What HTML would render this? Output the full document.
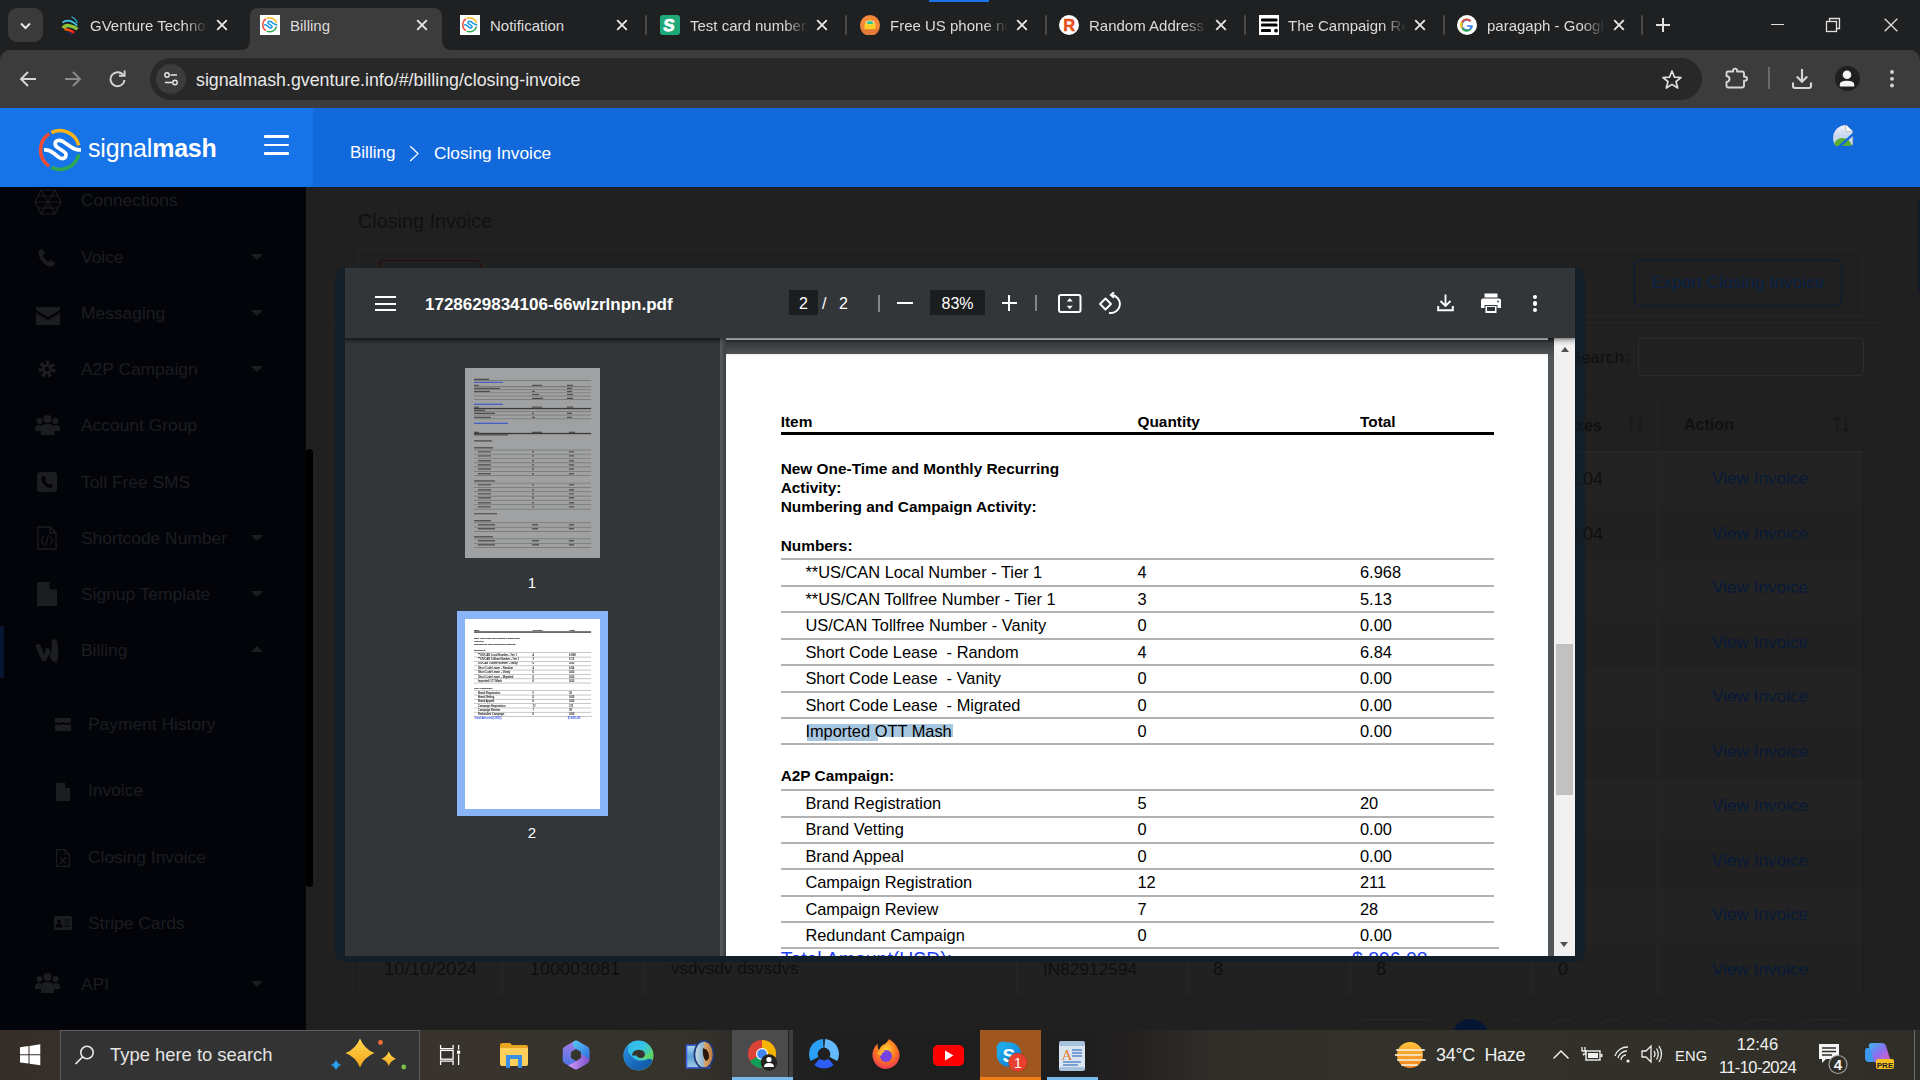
<!DOCTYPE html>
<html><head><meta charset="utf-8">
<style>
*{box-sizing:border-box;margin:0;padding:0}
html,body{width:1920px;height:1080px;overflow:hidden;background:#202124;font-family:"Liberation Sans",sans-serif}
.a{position:absolute}
#tabs{left:0;top:0;width:1920px;height:50px;background:#1f2021}
.tab{position:absolute;top:8px;height:42px;width:200px;color:#dcdcdc;font-size:15px}
.tab .fav{position:absolute;left:10px;top:7px;width:20px;height:20px}
.tab .tt{position:absolute;left:40px;top:8px;width:118px;white-space:nowrap;overflow:hidden;line-height:20px}
.tab .tt.fade{-webkit-mask-image:linear-gradient(90deg,#000 80%,transparent 100%)}
.tab .x{position:absolute;left:164px;top:9px;width:16px;height:16px}
.sep{position:absolute;top:15px;width:2px;height:20px;background:#4a4a4a;border-radius:1px}
#toolbar{left:0;top:50px;width:1920px;height:58px;background:#3c3c3c;border-radius:10px 10px 0 0}
#omni{left:150px;top:8px;width:1552px;height:42px;border-radius:21px;background:#282828}
#hdr{left:0;top:108px;width:1920px;height:79px;background:#1269dc}
#hdrL{left:0;top:0;width:313px;height:79px;background:#1673e8}
#sidebar{left:0;top:187px;width:306px;height:843px;background:#030409;overflow:hidden}
#main{left:306px;top:187px;width:1614px;height:843px;background:#202020;overflow:hidden}
#mframe{left:335px;top:268px;width:1250px;height:694px;background:#131f28;border-radius:0 0 9px 9px}
#modal{left:345px;top:268px;width:1230px;height:688px;background:#323639;overflow:hidden}
#taskbar{left:0;top:1030px;width:1920px;height:50px;background:#362e2b}
</style></head><body>
<div id="tabs" class="a">
  <div class="a" style="left:8px;top:8px;width:35px;height:34px;border-radius:9px;background:#3a3a3a"></div>
  <svg class="a" style="left:18px;top:18px" width="15" height="15" viewBox="0 0 15 15"><path d="M3 5.5 L7.5 10 L12 5.5" stroke="#e8e8e8" stroke-width="2" fill="none"/></svg>
  <div class="a" style="left:0;top:0;width:1px;height:1px"></div>
  <div class="a" style="left:929px;top:0;width:60px;height:2px;background:#1a73e8"></div>
  <!-- active tab shape -->
  <svg class="a" style="left:240px;top:7px" width="212" height="43" viewBox="0 0 212 43"><path d="M0 43 Q10 43 10 33 L10 10 Q10 1 19 1 L193 1 Q202 1 202 10 L202 33 Q202 43 212 43 Z" fill="#3c3c3c"/></svg>
  <div class="tab" style="left:50px"><svg class="fav" viewBox="0 0 20 20"><defs><linearGradient id="gvr" x1="0" y1="0" x2="1" y2="0"><stop offset="0" stop-color="#ff7a10"/><stop offset="1" stop-color="#ff1010"/></linearGradient></defs><path d="M11.5 1.8 Q15.5 3 17.3 8.2" stroke="#2aa8c8" stroke-width="1.3" fill="none"/><path d="M2.4 7.6 Q9 2.6 17.2 10.6" stroke="#40c8e8" stroke-width="1.7" fill="none"/><path d="M3 13.2 Q5 9.6 10 10.8 Q15 12 17.4 14.2" stroke="#8cc63f" stroke-width="3.4" fill="none"/><path d="M4.6 14 Q9 14.5 14.2 17.6" stroke="url(#gvr)" stroke-width="2.4" fill="none"/><path d="M6.8 17.2 Q9.5 18.6 12.2 19.1" stroke="#1c2a70" stroke-width="1.2" fill="none"/></svg><div class="tt fade">GVenture Technologies</div><svg class="x" viewBox="0 0 16 16"><path d="M3.2 3.2L12.8 12.8M12.8 3.2L3.2 12.8" stroke="#e6e6e6" stroke-width="1.9"/></svg></div>
  <div class="tab" style="left:250px"><svg class="fav" viewBox="0 0 20 20"><rect width="20" height="20" fill="#fff"/><g transform="translate(-0.3,0.4) scale(0.36)"><path d="M17.05 42.08 A19.4 19.4 0 0 1 17.33 9.73" stroke="#ef4b36" stroke-width="4" fill="none"/><path d="M19.40 8.56 A19.4 19.4 0 0 1 46.72 21.31" stroke="#fbb417" stroke-width="4" fill="none"/><path d="M46.80 30.36 A19.4 19.4 0 0 1 19.40 43.44" stroke="#2fa84f" stroke-width="4" fill="none"/><path d="M12 26 Q17 25.5 22 29.5 L27 33.5 Q31 36 33.5 33 Q35.5 29.5 31 27 L25.5 23.5 Q22 21 23.5 18 Q26 15 31 17.5 L39 23 Q43 26 49 26" stroke="#1e9be8" stroke-width="4.5" fill="none"/></g></svg><div class="tt">Billing</div><svg class="x" viewBox="0 0 16 16"><path d="M3.2 3.2L12.8 12.8M12.8 3.2L3.2 12.8" stroke="#e6e6e6" stroke-width="1.9"/></svg></div>
  <div class="tab" style="left:450px"><svg class="fav" viewBox="0 0 20 20"><rect width="20" height="20" fill="#fff"/><g transform="translate(-0.3,0.4) scale(0.36)"><path d="M17.05 42.08 A19.4 19.4 0 0 1 17.33 9.73" stroke="#ef4b36" stroke-width="4" fill="none"/><path d="M19.40 8.56 A19.4 19.4 0 0 1 46.72 21.31" stroke="#fbb417" stroke-width="4" fill="none"/><path d="M46.80 30.36 A19.4 19.4 0 0 1 19.40 43.44" stroke="#2fa84f" stroke-width="4" fill="none"/><path d="M12 26 Q17 25.5 22 29.5 L27 33.5 Q31 36 33.5 33 Q35.5 29.5 31 27 L25.5 23.5 Q22 21 23.5 18 Q26 15 31 17.5 L39 23 Q43 26 49 26" stroke="#1e9be8" stroke-width="4.5" fill="none"/></g></svg><div class="tt">Notification</div><svg class="x" viewBox="0 0 16 16"><path d="M3.2 3.2L12.8 12.8M12.8 3.2L3.2 12.8" stroke="#e6e6e6" stroke-width="1.9"/></svg></div>
  <div class="sep" style="left:645px"></div>
  <div class="tab" style="left:650px"><svg class="fav" viewBox="0 0 20 20"><rect width="20" height="20" rx="3" fill="#20a978"/><text x="10.2" y="16.2" font-size="17" font-weight="700" fill="#fff" stroke="#fff" stroke-width="0.7" text-anchor="middle" font-family="Liberation Sans" transform="skewX(-6)" style="font-weight:bold">S</text></svg><div class="tt fade">Test card numbers</div><svg class="x" viewBox="0 0 16 16"><path d="M3.2 3.2L12.8 12.8M12.8 3.2L3.2 12.8" stroke="#e6e6e6" stroke-width="1.9"/></svg></div>
  <div class="sep" style="left:845px"></div>
  <div class="tab" style="left:850px"><svg class="fav" viewBox="0 0 20 20"><circle cx="10" cy="10" r="10" fill="#f5883a"/><path d="M0.5 13.8 H19.5 A10 10 0 0 1 0.5 13.8Z" fill="#e47a38"/><path d="M4.5 8.8 L10 4.2 L15.5 8.8 V14.2 H4.5Z" fill="#fcd22a"/><path d="M5 6.8 Q10 5 15 6.8 L10 9.8Z" fill="#fff"/><ellipse cx="10" cy="7.6" rx="3.2" ry="1.6" fill="#2ac49a"/><path d="M4.5 14.2 L10 10.5 L15.5 14.2" stroke="#f0b818" stroke-width="0.6" fill="none"/></svg><div class="tt fade">Free US phone numbers</div><svg class="x" viewBox="0 0 16 16"><path d="M3.2 3.2L12.8 12.8M12.8 3.2L3.2 12.8" stroke="#e6e6e6" stroke-width="1.9"/></svg></div>
  <div class="sep" style="left:1045px"></div>
  <div class="tab" style="left:1049px"><svg class="fav" viewBox="0 0 20 20"><circle cx="10" cy="10" r="10" fill="#fff"/><text x="10.3" y="16.3" font-size="16.5" fill="#e9501c" stroke="#e9501c" stroke-width="0.5" text-anchor="middle" font-family="Liberation Sans" style="font-weight:bold">R</text></svg><div class="tt fade">Random Address Generator</div><svg class="x" viewBox="0 0 16 16"><path d="M3.2 3.2L12.8 12.8M12.8 3.2L3.2 12.8" stroke="#e6e6e6" stroke-width="1.9"/></svg></div>
  <div class="sep" style="left:1244px"></div>
  <div class="tab" style="left:1248px"><svg class="fav" viewBox="0 0 20 20" style="overflow:visible"><rect x="1" y="0" width="20" height="20" fill="#fff"/><rect x="3" y="3.4" width="16.5" height="3" rx="1.2" fill="#000"/><rect x="3" y="8.6" width="16.5" height="3" rx="1.2" fill="#000"/><rect x="3" y="14.1" width="10" height="3" rx="1.2" fill="#000"/><circle cx="18" cy="15.6" r="1.9" fill="#000"/></svg><div class="tt fade">The Campaign Registry</div><svg class="x" viewBox="0 0 16 16"><path d="M3.2 3.2L12.8 12.8M12.8 3.2L3.2 12.8" stroke="#e6e6e6" stroke-width="1.9"/></svg></div>
  <div class="sep" style="left:1443px"></div>
  <div class="tab" style="left:1447px"><svg class="fav" viewBox="0 0 20 20"><circle cx="10" cy="10" r="10" fill="#fff"/><path d="M15.6 10.2 L10.2 10.2 L10.2 12 L13.5 12 Q12.8 14.3 10.2 14.3 A4.3 4.3 0 1 1 13 6.8 L14.3 5.5 A6.2 6.2 0 1 0 16 11.4 Z" fill="#4285f4"/><path d="M5.8 7.7 L4.2 6.6 A6.2 6.2 0 0 1 14.3 5.5 L13 6.8 A4.3 4.3 0 0 0 5.8 7.7Z" fill="#ea4335"/><path d="M5.8 7.7 A4.3 4.3 0 0 0 5.9 12.4 L4.3 13.6 A6.2 6.2 0 0 1 4.2 6.6Z" fill="#fbbc05"/><path d="M5.9 12.4 A4.3 4.3 0 0 0 12.5 13.8 L14 15 A6.2 6.2 0 0 1 4.3 13.6Z" fill="#34a853"/></svg><div class="tt fade">paragaph - Google Search</div><svg class="x" viewBox="0 0 16 16"><path d="M3.2 3.2L12.8 12.8M12.8 3.2L3.2 12.8" stroke="#e6e6e6" stroke-width="1.9"/></svg></div>
  <div class="sep" style="left:1641px"></div>
  <svg class="a" style="left:1654px;top:16px" width="18" height="18" viewBox="0 0 18 18"><path d="M9 2V16M2 9H16" stroke="#e0e0e0" stroke-width="2"/></svg>
  <div class="a" style="left:1771px;top:24px;width:13px;height:1.3px;background:#e0e0e0"></div>
  <svg class="a" style="left:1825px;top:17px" width="16" height="16" viewBox="0 0 16 16"><rect x="1.5" y="4.5" width="10" height="10" stroke="#e0e0e0" stroke-width="1.3" fill="none"/><path d="M4.5 4.5V1.5H14.5V11.5H11.5" stroke="#e0e0e0" stroke-width="1.3" fill="none"/></svg>
  <svg class="a" style="left:1884px;top:18px" width="14" height="14" viewBox="0 0 14 14"><path d="M0.7 0.7L13.3 13.3M13.3 0.7L0.7 13.3" stroke="#e0e0e0" stroke-width="1.3"/></svg>
</div>
<div id="toolbar" class="a">
  <svg class="a" style="left:18px;top:20px" width="20" height="18" viewBox="0 0 20 18"><path d="M18 9H3M10 2L3 9L10 16" stroke="#d6d6d6" stroke-width="1.9" fill="none"/></svg>
  <svg class="a" style="left:63px;top:20px" width="20" height="18" viewBox="0 0 20 18"><path d="M2 9H17M10 2L17 9L10 16" stroke="#8a8a8a" stroke-width="1.9" fill="none"/></svg>
  <svg class="a" style="left:108px;top:20px" width="20" height="18" viewBox="0 0 20 18"><path d="M15.5 5.5 A7 7 0 1 0 16.5 10" stroke="#d6d6d6" stroke-width="1.9" fill="none"/><path d="M11 5.8H16.6V0.5" stroke="#d6d6d6" stroke-width="1.9" fill="none"/></svg>
  <div id="omni" class="a">
    <div class="a" style="left:6px;top:6px;width:30px;height:30px;border-radius:15px;background:#3c3c3c"></div>
    <svg class="a" style="left:13px;top:13px" width="16" height="16" viewBox="0 0 16 16"><circle cx="4" cy="4" r="2.2" stroke="#e8e8e8" stroke-width="1.4" fill="none"/><path d="M7.5 4H14M2 11.5H9" stroke="#e8e8e8" stroke-width="1.6"/><circle cx="12" cy="11.5" r="2.2" stroke="#e8e8e8" stroke-width="1.4" fill="none"/></svg>
    <div class="a" style="left:46px;top:11px;font-size:17.8px;color:#e8e8e8;white-space:nowrap;line-height:22px">signalmash.gventure.info/#/billing/closing-invoice</div>
    <svg class="a" style="left:1511px;top:11px" width="22" height="21" viewBox="0 0 22 21"><path d="M11 2L13.5 8.2L20 8.5L15 12.6L16.7 19L11 15.4L5.3 19L7 12.6L2 8.5L8.5 8.2Z" stroke="#e0e0e0" stroke-width="1.7" fill="none" stroke-linejoin="round"/></svg>
  </div>
  <svg class="a" style="left:1724px;top:16px" width="26" height="26" viewBox="0 0 26 26"><path d="M4 5.5 H9.2 V4.5 A1.9 1.9 0 0 1 13 4.5 V5.5 H18 Q20 5.5 20 7.5 V10.8 H21 A2 2 0 0 1 21 14.8 H20 V19.5 Q20 21.5 18 21.5 H4 Q2.5 21.5 2.5 20 V16 Q5.5 15.6 5.5 13 Q5.5 10.4 2.5 10 V7 Q2.5 5.5 4 5.5Z" stroke="#d6d6d6" stroke-width="1.9" fill="none" stroke-linejoin="round"/></svg>
  <div class="a" style="left:1768px;top:17px;width:1.5px;height:22px;background:#6a6a6a"></div>
  <svg class="a" style="left:1790px;top:17px" width="24" height="24" viewBox="0 0 24 24"><path d="M12 2V14.5M6.8 9.5L12 14.7L17.2 9.5" stroke="#d6d6d6" stroke-width="2.1" fill="none"/><path d="M3 15.5V19 Q3 21 5 21 H19 Q21 21 21 19 V15.5" stroke="#d6d6d6" stroke-width="2.1" fill="none"/></svg>
  <div class="a" style="left:1835px;top:16px;width:25px;height:25px;border-radius:13px;background:#1f1f1f"></div>
  <svg class="a" style="left:1835px;top:17px" width="24" height="24" viewBox="0 0 24 24"><circle cx="12" cy="7.8" r="4.3" fill="#f4f4f4"/><path d="M4.8 19.5 V17.5 Q4.8 13.8 12 13.8 Q19.2 13.8 19.2 17.5 V19.5 Z" fill="#f4f4f4"/></svg>
  <svg class="a" style="left:1886px;top:18px" width="12" height="22" viewBox="0 0 12 22"><circle cx="6" cy="4" r="1.9" fill="#d6d6d6"/><circle cx="6" cy="10.8" r="1.9" fill="#d6d6d6"/><circle cx="6" cy="17.5" r="1.9" fill="#d6d6d6"/></svg>
</div>
<div id="hdr" class="a"><div id="hdrL" class="a"></div>
  <svg class="a" style="left:32px;top:16px" width="56" height="52" viewBox="0 0 56 52">
    <path d="M17.05 42.08 A19.4 19.4 0 0 1 17.33 9.73" stroke="#ef4b36" stroke-width="3.5" fill="none"/>
    <path d="M19.40 8.56 A19.4 19.4 0 0 1 46.72 21.31" stroke="#fbb417" stroke-width="3.5" fill="none"/>
    <path d="M46.80 30.36 A19.4 19.4 0 0 1 19.40 43.44" stroke="#2fa84f" stroke-width="3.5" fill="none"/>
    <path d="M12 26 Q17 25.5 22 29.5 L27 33.5 Q31 36 33.5 33 Q35.5 29.5 31 27 L25.5 23.5 Q22 21 23.5 18 Q26 15 31 17.5 L39 23 Q43 26 49 26" stroke="#fff" stroke-width="3.7" fill="none"/>
  </svg>
  <div class="a" style="left:88px;top:24px;font-size:25px;color:#fff;line-height:32px;letter-spacing:-0.2px">signal<b>mash</b></div>
  <div class="a" style="left:264px;top:27px;width:25px;height:2.6px;background:#fff;border-radius:1px"></div>
  <div class="a" style="left:264px;top:35.5px;width:25px;height:2.6px;background:#fff;border-radius:1px"></div>
  <div class="a" style="left:264px;top:44px;width:25px;height:2.6px;background:#fff;border-radius:1px"></div>
  <div class="a" style="left:350px;top:34px;font-size:17px;color:#fff;line-height:22px">Billing</div>
  <svg class="a" style="left:408px;top:37px" width="12" height="18" viewBox="0 0 12 18"><path d="M2.2 1.2L10 8.6L2.2 16" stroke="#fff" stroke-width="1.3" fill="none"/></svg>
  <div class="a" style="left:434px;top:34px;font-size:17.3px;color:#fff;line-height:22px">Closing Invoice</div>
  <svg class="a" style="left:1833px;top:17px" width="21" height="21" viewBox="0 0 21 21">
    <defs><clipPath id="avc"><circle cx="13.2" cy="13.2" r="13.2"/></clipPath><linearGradient id="avg" x1="0" y1="0" x2="0" y2="1"><stop offset="0" stop-color="#f2f5fb"/><stop offset=".55" stop-color="#c9d6ef"/><stop offset="1" stop-color="#d5def2"/></linearGradient></defs>
    <g clip-path="url(#avc)">
      <path d="M0 0 H13 L19.7 6.5 V19.7 H0 Z" fill="url(#avg)" stroke="#b59f86" stroke-width="0.6"/>
      <ellipse cx="9.5" cy="20.5" rx="8.8" ry="7.5" fill="#5aac37"/>
      <path d="M13 0 V6.3 H19.7" fill="#f4f4f4" stroke="#9c9c9c" stroke-width="0.9"/>
      <path d="M13.2 0.3 L19.5 6.3 H13.2Z" fill="#f8f8f8"/>
      <path d="M21.5 8 L6.5 21.5" stroke="#1269dc" stroke-width="2.4"/>
    </g>
  </svg>
</div>
<div id="sidebar" class="a" style="color:#1c1d21;font-size:17.4px">
  <style>
  .si{position:absolute;left:81px;line-height:22px;white-space:nowrap}
  .ic{position:absolute}
  .car{position:absolute;left:251px;width:0;height:0;border-left:6px solid transparent;border-right:6px solid transparent;border-top:6px solid #1c1d21}
  .caru{position:absolute;left:251px;width:0;height:0;border-left:6px solid transparent;border-right:6px solid transparent;border-bottom:6px solid #1c1d21}
  </style>
  <svg class="ic" style="left:34px;top:2px" width="28" height="26" viewBox="0 0 28 26"><path d="M7 1H21L27 13L21 25H7L1 13Z M7 1L21 25 M21 1L7 25 M1 13H27 M4 7H24 M4 19H24" stroke="#1c1d21" stroke-width="1.2" fill="none"/></svg>
  <div class="si" style="top:2px">Connections</div>
  <svg class="ic" style="left:37px;top:61px" width="20" height="20" viewBox="0 0 20 20"><path d="M4 1 Q1 2 1.5 6 Q3 13 9 17 Q13 20 16 18 L18 15 L14 12 L11.5 14 Q7 11 6 7 L8 5 L5.5 1Z" fill="#1c1d21"/></svg>
  <div class="si" style="top:59px">Voice</div><div class="car" style="top:67px"></div>
  <svg class="ic" style="left:36px;top:120px" width="24" height="18" viewBox="0 0 24 18"><path d="M0 0H24V3L12 10L0 3Z M0 6L12 13L24 6V18H0Z" fill="#1c1d21"/></svg>
  <div class="si" style="top:115px">Messaging</div><div class="car" style="top:123px"></div>
  <svg class="ic" style="left:37px;top:172px" width="20" height="20" viewBox="0 0 20 20"><circle cx="10" cy="10" r="6" stroke="#1c1d21" stroke-width="5" fill="none" stroke-dasharray="3 2.3"/><circle cx="10" cy="10" r="5" fill="#1c1d21"/><circle cx="10" cy="10" r="2.2" fill="#03040a"/></svg>
  <div class="si" style="top:171px">A2P Campaign</div><div class="car" style="top:179px"></div>
  <svg class="ic" style="left:35px;top:227px" width="25" height="22" viewBox="0 0 25 22"><circle cx="12.5" cy="5" r="4" fill="#1c1d21"/><circle cx="4.5" cy="7" r="3" fill="#1c1d21"/><circle cx="20.5" cy="7" r="3" fill="#1c1d21"/><path d="M6 21V14Q6 10 12.5 10Q19 10 19 14V21Z M0 15Q0 11 4.5 11Q6 11 6 12V17H0Z M25 15Q25 11 20.5 11Q19 11 19 12V17H25Z" fill="#1c1d21"/></svg>
  <div class="si" style="top:227px">Account Group</div>
  <svg class="ic" style="left:37px;top:285px" width="20" height="20" viewBox="0 0 20 20"><rect width="20" height="20" rx="3" fill="#1c1d21"/><path d="M6 4 Q4 5 4.5 8 Q6 13 11 15.5 Q13.5 16.5 15 15 L16 13.5 L13.5 11.5 L12 12.8 Q9 11 8 8 L9.2 6.8 L7.5 4Z" fill="#03040a"/></svg>
  <div class="si" style="top:284px">Toll Free SMS</div>
  <svg class="ic" style="left:37px;top:527px" width="20" height="24" viewBox="0 0 20 24" style="display:none"></svg>
  <svg class="ic" style="left:37px;top:339px" width="20" height="24" viewBox="0 0 20 24"><path d="M1 1H13L19 7V23H1Z M13 1V7H19" stroke="#1c1d21" stroke-width="1.3" fill="none"/><path d="M7 10L4.5 14.5L7 19 M13 10L15.5 14.5L13 19 M11.5 9L8.5 20" stroke="#1c1d21" stroke-width="1.2" fill="none"/></svg>
  <div class="si" style="top:340px">Shortcode Number</div><div class="car" style="top:348px"></div>
  <svg class="ic" style="left:37px;top:395px" width="20" height="24" viewBox="0 0 20 24"><path d="M0 0H13L20 7V24H0Z" fill="#1c1d21"/><path d="M13 0V7H20" fill="#03040a" stroke="#03040a" stroke-width="0.8"/></svg>
  <div class="si" style="top:396px">Signup Template</div><div class="car" style="top:404px"></div>
  <div class="a" style="left:0;top:439px;width:4px;height:52px;background:#061633"></div>
  <svg class="ic" style="left:35px;top:452px" width="25" height="24" viewBox="0 0 25 24"><path d="M0 6 L5 5 L9 16 L11 9 L14 9 L16 16 L17 1 L21 0 Q25 8 22 24 L17 22 L14 15 L11 22 L7 22 Z" fill="#1c1d21"/></svg>
  <div class="si" style="top:452px">Billing</div><div class="caru" style="top:459px"></div>
  <svg class="ic" style="left:55px;top:531px" width="16" height="13" viewBox="0 0 16 13"><path d="M0 0H16V4Q12 6 8 4Q4 6 0 4Z M0 6Q4 8 8 6Q12 8 16 6V13H0Z" fill="#1c1d21"/></svg>
  <div class="si" style="left:88px;top:526px">Payment History</div>
  <svg class="ic" style="left:56px;top:596px" width="14" height="18" viewBox="0 0 14 18"><path d="M0 0H9L14 5V18H0Z" fill="#1c1d21"/><path d="M9 0V5H14" fill="#03040a"/></svg>
  <div class="si" style="left:88px;top:592px">Invoice</div>
  <svg class="ic" style="left:56px;top:662px" width="14" height="18" viewBox="0 0 14 18"><path d="M0.6 0.6H9L13.4 5V17.4H0.6Z M9 0.6V5H13.4" stroke="#1c1d21" stroke-width="1.1" fill="none"/><path d="M4 8L10 15M10 8L4 15" stroke="#1c1d21" stroke-width="1.2"/></svg>
  <div class="si" style="left:88px;top:659px">Closing Invoice</div>
  <svg class="ic" style="left:54px;top:729px" width="18" height="14" viewBox="0 0 18 14"><rect width="18" height="14" rx="1.5" fill="#1c1d21"/><circle cx="5" cy="5.5" r="2" fill="#03040a"/><path d="M2 11Q2 8 5 8Q8 8 8 11Z M10 4H16M10 7H16M10 10H16" stroke="#03040a" stroke-width="1.2" fill="#03040a"/></svg>
  <div class="si" style="left:88px;top:725px">Stripe Cards</div>
  <svg class="ic" style="left:35px;top:785px" width="25" height="22" viewBox="0 0 25 22"><circle cx="12.5" cy="5" r="4" fill="#1c1d21"/><circle cx="4.5" cy="7" r="3" fill="#1c1d21"/><circle cx="20.5" cy="7" r="3" fill="#1c1d21"/><path d="M6 21V14Q6 10 12.5 10Q19 10 19 14V21Z M0 15Q0 11 4.5 11Q6 11 6 12V17H0Z M25 15Q25 11 20.5 11Q19 11 19 12V17H25Z" fill="#1c1d21"/></svg>
  <div class="si" style="top:786px">API</div><div class="car" style="top:794px"></div>
</div>
<div class="a" style="left:306px;top:187px;width:9px;height:843px;background:#1e1e1e"></div>
<div class="a" style="left:307px;top:449px;width:7px;height:438px;background:#010101;border-radius:4px"></div>
<div id="main" class="a"></div>
<div class="a" style="left:306px;top:449px;width:7px;height:438px;background:#000;border-radius:4px"></div>
<div class="a" style="left:358px;top:208px;font-size:19.8px;color:#101010;line-height:26px">Closing Invoice</div>
<div class="a" style="left:322px;top:196px;width:1px;height:817px;background:#242424"></div>
<div class="a" style="left:358px;top:249px;width:1505px;height:68px;border:1px solid #262626"></div>
<div class="a" style="left:379px;top:260px;width:102px;height:46px;border:1.5px solid #2a0a0a;border-radius:4px"></div>
<div class="a" style="left:1634px;top:260px;width:208px;height:46px;border:1.5px solid #071c3b;border-radius:5px;color:#0a2246;font-size:17.4px;line-height:43px;text-align:center">Export Closing Invoice</div>
<div class="a" style="left:333px;top:322px;width:1550px;height:1px;background:#262626"></div>
<div class="a" style="left:1540px;top:345px;width:89px;font-size:17.4px;color:#0f0f0f;line-height:24px;text-align:right">Search:</div>
<div class="a" style="left:1638px;top:338px;width:226px;height:38px;border:1px solid #2b2b2b;border-radius:4px"></div>
<div class="a" style="left:356px;top:396px;width:1508px;height:601px;border:1px solid #1d1d1d"></div>
<div class="a" style="left:356px;top:451px;width:1508px;height:1px;background:#282828"></div>
<div class="a" style="left:357px;top:452.0px;width:1506px;height:53.5px;background:#232323;border-top:1px solid #242424"></div>
<div class="a" style="left:357px;top:506.6px;width:1506px;height:53.5px;background:#212121;border-top:1px solid #242424"></div>
<div class="a" style="left:357px;top:561.1px;width:1506px;height:53.5px;background:#232323;border-top:1px solid #242424"></div>
<div class="a" style="left:357px;top:615.6px;width:1506px;height:53.5px;background:#212121;border-top:1px solid #242424"></div>
<div class="a" style="left:357px;top:670.2px;width:1506px;height:53.5px;background:#232323;border-top:1px solid #242424"></div>
<div class="a" style="left:357px;top:724.8px;width:1506px;height:53.5px;background:#212121;border-top:1px solid #242424"></div>
<div class="a" style="left:357px;top:779.3px;width:1506px;height:53.5px;background:#232323;border-top:1px solid #242424"></div>
<div class="a" style="left:357px;top:833.8px;width:1506px;height:53.5px;background:#212121;border-top:1px solid #242424"></div>
<div class="a" style="left:357px;top:888.4px;width:1506px;height:53.5px;background:#232323;border-top:1px solid #242424"></div>
<div class="a" style="left:357px;top:943.0px;width:1506px;height:53.5px;background:#212121;border-top:1px solid #242424"></div>
<div class="a" style="left:501.5px;top:396px;width:1px;height:601px;background:#262626"></div>
<div class="a" style="left:644px;top:396px;width:1px;height:601px;background:#262626"></div>
<div class="a" style="left:1016px;top:396px;width:1px;height:601px;background:#262626"></div>
<div class="a" style="left:1187px;top:396px;width:1px;height:601px;background:#262626"></div>
<div class="a" style="left:1350px;top:396px;width:1px;height:601px;background:#262626"></div>
<div class="a" style="left:1531px;top:396px;width:1px;height:601px;background:#262626"></div>
<div class="a" style="left:1656.5px;top:396px;width:1px;height:601px;background:#262626"></div>
<div class="a" style="left:1575px;top:412px;font-size:16.2px;font-weight:bold;color:#101010;line-height:26px">xes</div>
<div class="a" style="left:1684px;top:412px;font-size:16px;font-weight:bold;color:#101010;line-height:26px">Action</div>
<svg class="a" style="left:1625px;top:414px" width="22" height="20" viewBox="0 0 22 20"><path d="M6 17V3M3 6L6 3L9 6 M15 3V17M12 14L15 17L18 14" stroke="#161616" stroke-width="1.1" fill="none"/></svg>
<svg class="a" style="left:1831px;top:414px" width="22" height="20" viewBox="0 0 22 20"><path d="M6 17V3M3 6L6 3L9 6 M15 3V17M12 14L15 17L18 14" stroke="#161616" stroke-width="1.1" fill="none"/></svg>
<div class="a" style="left:1712px;top:466.0px;font-size:17.2px;color:#071a38;line-height:24px">View Invoice</div>
<div class="a" style="left:1712px;top:520.5px;font-size:17.2px;color:#071a38;line-height:24px">View Invoice</div>
<div class="a" style="left:1712px;top:575.1px;font-size:17.2px;color:#071a38;line-height:24px">View Invoice</div>
<div class="a" style="left:1712px;top:629.6px;font-size:17.2px;color:#071a38;line-height:24px">View Invoice</div>
<div class="a" style="left:1712px;top:684.2px;font-size:17.2px;color:#071a38;line-height:24px">View Invoice</div>
<div class="a" style="left:1712px;top:738.8px;font-size:17.2px;color:#071a38;line-height:24px">View Invoice</div>
<div class="a" style="left:1712px;top:793.3px;font-size:17.2px;color:#071a38;line-height:24px">View Invoice</div>
<div class="a" style="left:1712px;top:847.8px;font-size:17.2px;color:#071a38;line-height:24px">View Invoice</div>
<div class="a" style="left:1712px;top:902.4px;font-size:17.2px;color:#071a38;line-height:24px">View Invoice</div>
<div class="a" style="left:1712px;top:957.0px;font-size:17.2px;color:#071a38;line-height:24px">View Invoice</div>
<div class="a" style="left:1568px;top:466.0px;font-size:18px;color:#0f0f0f;line-height:26px">2.04</div>
<div class="a" style="left:1568px;top:520.5px;font-size:18px;color:#0f0f0f;line-height:26px">2.04</div>
<div class="a" style="left:384px;top:956.0px;font-size:18.6px;color:#0f0f0f;line-height:26px">10/10/2024</div>
<div class="a" style="left:530px;top:956.0px;font-size:18px;color:#0f0f0f;line-height:26px">100003081</div>
<div class="a" style="left:671px;top:956.0px;font-size:17px;color:#0f0f0f;line-height:26px">vsdvsdv dsvsdvs</div>
<div class="a" style="left:1043px;top:956.0px;font-size:17.3px;color:#0f0f0f;line-height:26px">IN82912594</div>
<div class="a" style="left:1213px;top:956.0px;font-size:18px;color:#0f0f0f;line-height:26px">8</div>
<div class="a" style="left:1376px;top:956.0px;font-size:18px;color:#0f0f0f;line-height:26px">8</div>
<div class="a" style="left:1558px;top:956.0px;font-size:18px;color:#0f0f0f;line-height:26px">0</div>
<div class="a" style="left:1347px;top:1019px;width:95px;height:40px;border:1px solid #292929;border-radius:20px"></div>
<div class="a" style="left:1452px;top:1019px;width:37px;height:40px;background:#041633;border-radius:20px"></div>
<div class="a" style="left:1499px;top:1019px;width:37px;height:40px;border:1px solid #292929;border-radius:20px"></div>
<div class="a" style="left:1546px;top:1019px;width:37px;height:40px;border:1px solid #292929;border-radius:20px"></div>
<div class="a" style="left:1594px;top:1019px;width:37px;height:40px;border:1px solid #292929;border-radius:20px"></div>
<div class="a" style="left:1641px;top:1019px;width:37px;height:40px;border:1px solid #292929;border-radius:20px"></div>
<div class="a" style="left:1688px;top:1019px;width:39px;height:40px;border:1px solid #292929;border-radius:20px"></div>
<div class="a" style="left:1737px;top:1019px;width:49px;height:40px;border:1px solid #292929;border-radius:20px"></div>
<div class="a" style="left:1794px;top:1019px;width:66px;height:40px;border:1px solid #292929;border-radius:20px"></div>
<div class="a" style="left:356px;top:996px;width:1508px;height:1px;background:#1c1c1c"></div>
<div class="a" style="left:1918px;top:200px;width:2px;height:92px;background:#111b29"></div>
<style>
.pt{position:absolute;white-space:nowrap;line-height:20px}
.pl{position:absolute}
.pg{position:absolute;left:0;top:0;width:822px;height:1158px;background:#fff;overflow:hidden}
.thumbp .pt{-webkit-text-stroke:0.6px currentColor;opacity:.85}
.thumbp .pl{transform:scaleY(2.2)}
</style>
<div id="mframe" class="a" style="border-radius:9px;background:rgba(5,29,47,.5)"></div>
<div id="modal" class="a">
<div class="a" style="left:375px;top:70px;width:834px;height:618px;background:#525659;overflow:hidden">
 <div class="a" style="left:6px;top:-1px;width:822px;height:2px;background:#d8d8d8"></div>
 <div class="pg" style="left:6px;top:16px"><div class="pt" style="left:54.7px;top:57.56px;font-weight:bold;font-size:15.4px;color:#000">Item</div>
<div class="pt" style="left:411.5px;top:57.56px;font-weight:bold;font-size:15.4px;color:#000">Quantity</div>
<div class="pt" style="left:634.0px;top:57.56px;font-weight:bold;font-size:15.4px;color:#000">Total</div>
<div class="pl" style="left:54.5px;top:78.30px;width:713.0px;height:3.2px;background:#000"></div>
<div class="pt" style="left:54.7px;top:104.86px;font-weight:bold;font-size:15.4px;color:#000">New One-Time and Monthly Recurring</div>
<div class="pt" style="left:54.7px;top:124.06px;font-weight:bold;font-size:15.4px;color:#000">Activity:</div>
<div class="pt" style="left:54.7px;top:143.26px;font-weight:bold;font-size:15.4px;color:#000">Numbering and Campaign Activity:</div>
<div class="pt" style="left:54.7px;top:182.16px;font-weight:bold;font-size:15.4px;color:#000">Numbers:</div>
<div class="pl" style="left:81px;top:370.4px;width:71px;height:16.600000000000023px;background:#a7c6e0"></div>
<div class="pl" style="left:152px;top:370.4px;width:74.70000000000005px;height:12.600000000000023px;background:#a7c6e0"></div>
<div class="pl" style="left:54.5px;top:204.00px;width:713.0px;height:2px;background:#b2b2b2"></div>
<div class="pt" style="left:79.4px;top:208.32px;font-size:16.4px;color:#000">**US/CAN Local Number - Tier 1</div>
<div class="pt" style="left:411.5px;top:208.32px;font-size:16.4px;color:#000">4</div>
<div class="pt" style="left:634.0px;top:208.32px;font-size:16.4px;color:#000">6.968</div>
<div class="pl" style="left:54.5px;top:231.00px;width:713.0px;height:2px;background:#b2b2b2"></div>
<div class="pt" style="left:79.4px;top:234.76px;font-size:16.4px;color:#000">**US/CAN Tollfree Number - Tier 1</div>
<div class="pt" style="left:411.5px;top:234.76px;font-size:16.4px;color:#000">3</div>
<div class="pt" style="left:634.0px;top:234.76px;font-size:16.4px;color:#000">5.13</div>
<div class="pl" style="left:54.5px;top:257.00px;width:713.0px;height:2px;background:#b2b2b2"></div>
<div class="pt" style="left:79.4px;top:261.20px;font-size:16.4px;color:#000">US/CAN Tollfree Number - Vanity</div>
<div class="pt" style="left:411.5px;top:261.20px;font-size:16.4px;color:#000">0</div>
<div class="pt" style="left:634.0px;top:261.20px;font-size:16.4px;color:#000">0.00</div>
<div class="pl" style="left:54.5px;top:284.00px;width:713.0px;height:2px;background:#b2b2b2"></div>
<div class="pt" style="left:79.4px;top:287.64px;font-size:16.4px;color:#000">Short Code Lease &nbsp;- Random</div>
<div class="pt" style="left:411.5px;top:287.64px;font-size:16.4px;color:#000">4</div>
<div class="pt" style="left:634.0px;top:287.64px;font-size:16.4px;color:#000">6.84</div>
<div class="pl" style="left:54.5px;top:310.00px;width:713.0px;height:2px;background:#b2b2b2"></div>
<div class="pt" style="left:79.4px;top:314.08px;font-size:16.4px;color:#000">Short Code Lease &nbsp;- Vanity</div>
<div class="pt" style="left:411.5px;top:314.08px;font-size:16.4px;color:#000">0</div>
<div class="pt" style="left:634.0px;top:314.08px;font-size:16.4px;color:#000">0.00</div>
<div class="pl" style="left:54.5px;top:337.00px;width:713.0px;height:2px;background:#b2b2b2"></div>
<div class="pt" style="left:79.4px;top:340.52px;font-size:16.4px;color:#000">Short Code Lease &nbsp;- Migrated</div>
<div class="pt" style="left:411.5px;top:340.52px;font-size:16.4px;color:#000">0</div>
<div class="pt" style="left:634.0px;top:340.52px;font-size:16.4px;color:#000">0.00</div>
<div class="pl" style="left:54.5px;top:363.00px;width:713.0px;height:2px;background:#b2b2b2"></div>
<div class="pt" style="left:79.4px;top:366.96px;font-size:16.4px;color:#000">Imported OTT Mash</div>
<div class="pt" style="left:411.5px;top:366.96px;font-size:16.4px;color:#000">0</div>
<div class="pt" style="left:634.0px;top:366.96px;font-size:16.4px;color:#000">0.00</div>
<div class="pl" style="left:54.5px;top:389.00px;width:713.0px;height:2px;background:#b2b2b2"></div>
<div class="pt" style="left:54.7px;top:412.36px;font-weight:bold;font-size:15.4px;color:#000">A2P Campaign:</div>
<div class="pl" style="left:54.5px;top:435.00px;width:713.0px;height:2px;background:#b2b2b2"></div>
<div class="pt" style="left:79.4px;top:439.02px;font-size:16.4px;color:#000">Brand Registration</div>
<div class="pt" style="left:411.5px;top:439.02px;font-size:16.4px;color:#000">5</div>
<div class="pt" style="left:634.0px;top:439.02px;font-size:16.4px;color:#000">20</div>
<div class="pl" style="left:54.5px;top:462.00px;width:713.0px;height:2px;background:#b2b2b2"></div>
<div class="pt" style="left:79.4px;top:465.46px;font-size:16.4px;color:#000">Brand Vetting</div>
<div class="pt" style="left:411.5px;top:465.46px;font-size:16.4px;color:#000">0</div>
<div class="pt" style="left:634.0px;top:465.46px;font-size:16.4px;color:#000">0.00</div>
<div class="pl" style="left:54.5px;top:488.00px;width:713.0px;height:2px;background:#b2b2b2"></div>
<div class="pt" style="left:79.4px;top:491.90px;font-size:16.4px;color:#000">Brand Appeal</div>
<div class="pt" style="left:411.5px;top:491.90px;font-size:16.4px;color:#000">0</div>
<div class="pt" style="left:634.0px;top:491.90px;font-size:16.4px;color:#000">0.00</div>
<div class="pl" style="left:54.5px;top:514.00px;width:713.0px;height:2px;background:#b2b2b2"></div>
<div class="pt" style="left:79.4px;top:518.34px;font-size:16.4px;color:#000">Campaign Registration</div>
<div class="pt" style="left:411.5px;top:518.34px;font-size:16.4px;color:#000">12</div>
<div class="pt" style="left:634.0px;top:518.34px;font-size:16.4px;color:#000">211</div>
<div class="pl" style="left:54.5px;top:541.00px;width:713.0px;height:2px;background:#b2b2b2"></div>
<div class="pt" style="left:79.4px;top:544.78px;font-size:16.4px;color:#000">Campaign Review</div>
<div class="pt" style="left:411.5px;top:544.78px;font-size:16.4px;color:#000">7</div>
<div class="pt" style="left:634.0px;top:544.78px;font-size:16.4px;color:#000">28</div>
<div class="pl" style="left:54.5px;top:567.00px;width:713.0px;height:2px;background:#b2b2b2"></div>
<div class="pt" style="left:79.4px;top:571.22px;font-size:16.4px;color:#000">Redundant Campaign</div>
<div class="pt" style="left:411.5px;top:571.22px;font-size:16.4px;color:#000">0</div>
<div class="pt" style="left:634.0px;top:571.22px;font-size:16.4px;color:#000">0.00</div>
<div class="pl" style="left:54.5px;top:593.00px;width:718.5px;height:2px;background:#b2b2b2"></div>
<div class="pt" style="left:54.7px;top:595.08px;font-size:19.4px;color:#1f3ff2">Total Amount(USD):</div>
<div class="pt" style="left:626.0px;top:595.08px;font-size:19.4px;color:#1f3ff2">$ 896.08</div>
<div class="pt" style="left:54.7px;top:630.66px;font-weight:bold;font-size:15.4px;color:#000"></div></div>
 <div class="a" style="left:0;top:0;width:834px;height:18px;background:linear-gradient(#1e2022 0%,rgba(40,42,45,.6) 30%,rgba(82,86,89,0) 100%)"></div>
 <div class="a" style="left:6px;top:0;width:822px;height:1.6px;background:#c9c9c9"></div>
 <div class="a" style="left:0;top:0;width:6px;height:618px;background:linear-gradient(90deg,#575b5e,#3a3e41)"></div>
</div>
<div class="a" style="left:1209px;top:70px;width:21px;height:618px;background:#f1f1f1"></div>
<div class="a" style="left:1209px;top:70px;width:21px;height:8px;background:linear-gradient(#cfcfcf,#f1f1f1)"></div>
<div class="a" style="left:1215.5px;top:79px;width:0;height:0;border-left:4.5px solid transparent;border-right:4.5px solid transparent;border-bottom:5px solid #505050"></div>
<div class="a" style="left:1215px;top:674px;width:0;height:0;border-left:4.5px solid transparent;border-right:4.5px solid transparent;border-top:5px solid #505050"></div>
<div class="a" style="left:1211px;top:376px;width:17px;height:151px;background:#c1c1c1"></div>
<div class="a" style="left:0;top:70px;width:375px;height:618px;background:#323639;overflow:hidden">
 <div class="a" style="left:0;top:0;width:375px;height:6px;background:linear-gradient(#222426,rgba(50,54,57,0))"></div>
 <div class="a" style="left:120px;top:30px;width:135px;height:190px;overflow:hidden;background:#a0a1a2"><div class="pg" style="transform:scale(0.1642);transform-origin:0 0;background:transparent;opacity:.8"><div class="pl" style="left:54.81120584652862px;top:65.23020706455542px;width:91.35200974421437px;height:7.61266747868453px;background:#3a3a3a"></div>
<div class="pl" style="left:54.5px;top:73.08160779537135px;width:713.0px;height:4.8721071863581px;background:#6c6c6c"></div>
<div class="pl" style="left:54.81120584652862px;top:83.50060901339829px;width:176.6138855054811px;height:7.61266747868453px;background:#3048c0"></div>
<div class="pl" style="left:54.81120584652862px;top:101.77101096224116px;width:30.45066991473812px;height:7.61266747868453px;background:#3a3a3a"></div>
<div class="pl" style="left:408.0389768574908px;top:101.77101096224116px;width:60.90133982947624px;height:7.61266747868453px;background:#3a3a3a"></div>
<div class="pl" style="left:621.1936662606577px;top:101.77101096224116px;width:36.54080389768575px;height:7.61266747868453px;background:#3a3a3a"></div>
<div class="pl" style="left:54.5px;top:111.75395858708897px;width:713.0px;height:5.481120584652862px;background:#555"></div>
<div class="pl" style="left:54.81120584652862px;top:120.65042630937894px;width:158.34348355663823px;height:7.61266747868453px;background:#3a3a3a"></div>
<div class="pl" style="left:621.1936662606577px;top:120.65042630937894px;width:30.45066991473812px;height:7.61266747868453px;background:#3a3a3a"></div>
<div class="pl" style="left:54.5px;top:130.32886723507923px;width:713.0px;height:4.8721071863581px;background:#6c6c6c"></div>
<div class="pl" style="left:54.81120584652862px;top:138.9208282582218px;width:97.44214372716199px;height:7.61266747868453px;background:#3a3a3a"></div>
<div class="pl" style="left:408.0389768574908px;top:138.9208282582218px;width:18.270401948842874px;height:7.61266747868453px;background:#3a3a3a"></div>
<div class="pl" style="left:621.1936662606577px;top:138.9208282582218px;width:30.45066991473812px;height:7.61266747868453px;background:#3a3a3a"></div>
<div class="pl" style="left:54.5px;top:148.5992691839221px;width:713.0px;height:4.8721071863581px;background:#6c6c6c"></div>
<div class="pl" style="left:408.0389768574908px;top:157.8002436053592px;width:42.63093788063337px;height:7.61266747868453px;background:#3a3a3a"></div>
<div class="pl" style="left:621.1936662606577px;top:157.8002436053592px;width:36.54080389768575px;height:7.61266747868453px;background:#3a3a3a"></div>
<div class="pl" style="left:54.5px;top:168.08769792935442px;width:713.0px;height:4.8721071863581px;background:#6c6c6c"></div>
<div class="pl" style="left:408.0389768574908px;top:180.94275274056028px;width:66.99147381242386px;height:7.61266747868453px;background:#3a3a3a"></div>
<div class="pl" style="left:621.1936662606577px;top:180.94275274056028px;width:36.54080389768575px;height:7.61266747868453px;background:#3a3a3a"></div>
<div class="pl" style="left:54.5px;top:189.4031668696711px;width:713.0px;height:4.8721071863581px;background:#6c6c6c"></div>
<div class="pl" style="left:54.81120584652862px;top:217.483556638246px;width:176.6138855054811px;height:7.61266747868453px;background:#3050d0"></div>
<div class="pl" style="left:54.81120584652862px;top:234.53593179049943px;width:30.45066991473812px;height:7.61266747868453px;background:#3a3a3a"></div>
<div class="pl" style="left:408.0389768574908px;top:234.53593179049943px;width:60.90133982947624px;height:7.61266747868453px;background:#3a3a3a"></div>
<div class="pl" style="left:621.1936662606577px;top:234.53593179049943px;width:36.54080389768575px;height:7.61266747868453px;background:#3a3a3a"></div>
<div class="pl" style="left:54.5px;top:243.30085261875774px;width:713.0px;height:7.917174177831912px;background:#222"></div>
<div class="pl" style="left:54.81120584652862px;top:254.02436053593175px;width:66.99147381242386px;height:7.61266747868453px;background:#3a3a3a"></div>
<div class="pl" style="left:54.5px;top:262.4847746650426px;width:713.0px;height:4.8721071863581px;background:#6c6c6c"></div>
<div class="pl" style="left:54.81120584652862px;top:272.29476248477465px;width:127.89281364190012px;height:7.61266747868453px;background:#3a3a3a"></div>
<div class="pl" style="left:408.0389768574908px;top:272.29476248477465px;width:12.180267965895249px;height:7.61266747868453px;background:#3a3a3a"></div>
<div class="pl" style="left:621.1936662606577px;top:272.29476248477465px;width:30.45066991473812px;height:7.61266747868453px;background:#3a3a3a"></div>
<div class="pl" style="left:54.5px;top:283.8002436053593px;width:713.0px;height:4.8721071863581px;background:#6c6c6c"></div>
<div class="pl" style="left:54.81120584652862px;top:296.65529841656513px;width:103.53227771010961px;height:7.61266747868453px;background:#3a3a3a"></div>
<div class="pl" style="left:408.0389768574908px;top:296.65529841656513px;width:18.270401948842874px;height:7.61266747868453px;background:#3a3a3a"></div>
<div class="pl" style="left:621.1936662606577px;top:296.65529841656513px;width:30.45066991473812px;height:7.61266747868453px;background:#3a3a3a"></div>
<div class="pl" style="left:54.5px;top:306.9427527405603px;width:713.0px;height:4.8721071863581px;background:#6c6c6c"></div>
<div class="pl" style="left:54.81120584652862px;top:333.1961023142509px;width:207.06455542021922px;height:7.61266747868453px;background:#3050d0"></div>
<div class="pl" style="left:54.81120584652862px;top:388.0073081607795px;width:30.45066991473812px;height:7.61266747868453px;background:#3a3a3a"></div>
<div class="pl" style="left:408.0389768574908px;top:388.0073081607795px;width:60.90133982947624px;height:7.61266747868453px;background:#3a3a3a"></div>
<div class="pl" style="left:633.3739342265529px;top:388.0073081607795px;width:36.54080389768575px;height:7.61266747868453px;background:#3a3a3a"></div>
<div class="pl" style="left:54.5px;top:394.9451887941534px;width:713.0px;height:7.917174177831912px;background:#222"></div>
<div class="pl" style="left:54.81120584652862px;top:403.23264311814853px;width:207.06455542021922px;height:7.61266747868453px;background:#3a3a3a"></div>
<div class="pl" style="left:54.81120584652862px;top:440.3824604141292px;width:109.62241169305724px;height:7.61266747868453px;background:#3a3a3a"></div>
<div class="pl" style="left:54.81120584652862px;top:482.40438489646766px;width:115.71254567600486px;height:7.61266747868453px;background:#3a3a3a"></div>
<div class="pl" style="left:54.5px;top:496.95493300852615px;width:713.0px;height:4.8721071863581px;background:#6c6c6c"></div>
<div class="pl" style="left:79.17174177831912px;top:506.7649208282582px;width:79.17174177831912px;height:7.61266747868453px;background:#3a3a3a"></div>
<div class="pl" style="left:408.0389768574908px;top:506.7649208282582px;width:12.180267965895249px;height:7.61266747868453px;background:#3a3a3a"></div>
<div class="pl" style="left:633.3739342265529px;top:506.7649208282582px;width:30.45066991473812px;height:7.61266747868453px;background:#3a3a3a"></div>
<div class="pl" style="left:54.5px;top:522.533495736906px;width:713.0px;height:4.8721071863581px;background:#6c6c6c"></div>
<div class="pl" style="left:79.17174177831912px;top:531.7344701583436px;width:79.17174177831912px;height:7.61266747868453px;background:#3a3a3a"></div>
<div class="pl" style="left:408.0389768574908px;top:531.7344701583436px;width:12.180267965895249px;height:7.61266747868453px;background:#3a3a3a"></div>
<div class="pl" style="left:633.3739342265529px;top:531.7344701583436px;width:30.45066991473812px;height:7.61266747868453px;background:#3a3a3a"></div>
<div class="pl" style="left:54.5px;top:547.5030450669915px;width:713.0px;height:4.8721071863581px;background:#6c6c6c"></div>
<div class="pl" style="left:79.17174177831912px;top:560.967113276492px;width:79.17174177831912px;height:7.61266747868453px;background:#3a3a3a"></div>
<div class="pl" style="left:408.0389768574908px;top:560.967113276492px;width:12.180267965895249px;height:7.61266747868453px;background:#3a3a3a"></div>
<div class="pl" style="left:633.3739342265529px;top:560.967113276492px;width:30.45066991473812px;height:7.61266747868453px;background:#3a3a3a"></div>
<div class="pl" style="left:54.5px;top:574.9086479902558px;width:713.0px;height:4.8721071863581px;background:#6c6c6c"></div>
<div class="pl" style="left:79.17174177831912px;top:585.9366626065773px;width:79.17174177831912px;height:7.61266747868453px;background:#3a3a3a"></div>
<div class="pl" style="left:408.0389768574908px;top:585.9366626065773px;width:12.180267965895249px;height:7.61266747868453px;background:#3a3a3a"></div>
<div class="pl" style="left:633.3739342265529px;top:585.9366626065773px;width:30.45066991473812px;height:7.61266747868453px;background:#3a3a3a"></div>
<div class="pl" style="left:54.5px;top:600.4872107186358px;width:713.0px;height:4.8721071863581px;background:#6c6c6c"></div>
<div class="pl" style="left:79.17174177831912px;top:610.9062119366628px;width:79.17174177831912px;height:7.61266747868453px;background:#3a3a3a"></div>
<div class="pl" style="left:408.0389768574908px;top:610.9062119366628px;width:12.180267965895249px;height:7.61266747868453px;background:#3a3a3a"></div>
<div class="pl" style="left:633.3739342265529px;top:610.9062119366628px;width:30.45066991473812px;height:7.61266747868453px;background:#3a3a3a"></div>
<div class="pl" style="left:54.5px;top:627.2838002436051px;width:713.0px;height:4.8721071863581px;background:#6c6c6c"></div>
<div class="pl" style="left:79.17174177831912px;top:640.1388550548111px;width:79.17174177831912px;height:7.61266747868453px;background:#3a3a3a"></div>
<div class="pl" style="left:408.0389768574908px;top:640.1388550548111px;width:12.180267965895249px;height:7.61266747868453px;background:#3a3a3a"></div>
<div class="pl" style="left:633.3739342265529px;top:640.1388550548111px;width:30.45066991473812px;height:7.61266747868453px;background:#3a3a3a"></div>
<div class="pl" style="left:54.5px;top:652.8623629719855px;width:713.0px;height:4.8721071863581px;background:#6c6c6c"></div>
<div class="pl" style="left:54.81120584652862px;top:683.9878197320343px;width:127.89281364190012px;height:7.61266747868453px;background:#3a3a3a"></div>
<div class="pl" style="left:54.5px;top:698.5383678440927px;width:713.0px;height:4.8721071863581px;background:#6c6c6c"></div>
<div class="pl" style="left:79.17174177831912px;top:707.7393422655298px;width:79.17174177831912px;height:7.61266747868453px;background:#3a3a3a"></div>
<div class="pl" style="left:408.0389768574908px;top:707.7393422655298px;width:12.180267965895249px;height:7.61266747868453px;background:#3a3a3a"></div>
<div class="pl" style="left:633.3739342265529px;top:707.7393422655298px;width:30.45066991473812px;height:7.61266747868453px;background:#3a3a3a"></div>
<div class="pl" style="left:54.5px;top:724.7259439707672px;width:713.0px;height:4.8721071863581px;background:#6c6c6c"></div>
<div class="pl" style="left:79.17174177831912px;top:738.190012180268px;width:79.17174177831912px;height:7.61266747868453px;background:#3a3a3a"></div>
<div class="pl" style="left:408.0389768574908px;top:738.190012180268px;width:12.180267965895249px;height:7.61266747868453px;background:#3a3a3a"></div>
<div class="pl" style="left:633.3739342265529px;top:738.190012180268px;width:30.45066991473812px;height:7.61266747868453px;background:#3a3a3a"></div>
<div class="pl" style="left:54.5px;top:750.9135200974421px;width:713.0px;height:4.8721071863581px;background:#6c6c6c"></div>
<div class="pl" style="left:79.17174177831912px;top:762.5505481120584px;width:79.17174177831912px;height:7.61266747868453px;background:#3a3a3a"></div>
<div class="pl" style="left:408.0389768574908px;top:762.5505481120584px;width:12.180267965895249px;height:7.61266747868453px;background:#3a3a3a"></div>
<div class="pl" style="left:633.3739342265529px;top:762.5505481120584px;width:30.45066991473812px;height:7.61266747868453px;background:#3a3a3a"></div>
<div class="pl" style="left:54.5px;top:777.7101096224118px;width:713.0px;height:4.8721071863581px;background:#6c6c6c"></div>
<div class="pl" style="left:79.17174177831912px;top:786.911084043849px;width:79.17174177831912px;height:7.61266747868453px;background:#3a3a3a"></div>
<div class="pl" style="left:408.0389768574908px;top:786.911084043849px;width:12.180267965895249px;height:7.61266747868453px;background:#3a3a3a"></div>
<div class="pl" style="left:633.3739342265529px;top:786.911084043849px;width:30.45066991473812px;height:7.61266747868453px;background:#3a3a3a"></div>
<div class="pl" style="left:54.5px;top:803.2886723507917px;width:713.0px;height:4.8721071863581px;background:#6c6c6c"></div>
<div class="pl" style="left:79.17174177831912px;top:817.3617539585871px;width:79.17174177831912px;height:7.61266747868453px;background:#3a3a3a"></div>
<div class="pl" style="left:408.0389768574908px;top:817.3617539585871px;width:12.180267965895249px;height:7.61266747868453px;background:#3a3a3a"></div>
<div class="pl" style="left:633.3739342265529px;top:817.3617539585871px;width:30.45066991473812px;height:7.61266747868453px;background:#3a3a3a"></div>
<div class="pl" style="left:54.5px;top:830.0852618757611px;width:713.0px;height:4.8721071863581px;background:#6c6c6c"></div>
<div class="pl" style="left:79.17174177831912px;top:841.7222898903776px;width:79.17174177831912px;height:7.61266747868453px;background:#3a3a3a"></div>
<div class="pl" style="left:408.0389768574908px;top:841.7222898903776px;width:12.180267965895249px;height:7.61266747868453px;background:#3a3a3a"></div>
<div class="pl" style="left:633.3739342265529px;top:841.7222898903776px;width:30.45066991473812px;height:7.61266747868453px;background:#3a3a3a"></div>
<div class="pl" style="left:54.5px;top:856.8818514007309px;width:713.0px;height:4.8721071863581px;background:#6c6c6c"></div>
<div class="pl" style="left:54.81120584652862px;top:883.744214372716px;width:140.07308160779536px;height:7.61266747868453px;background:#3a3a3a"></div>
<div class="pl" style="left:54.81120584652862px;top:926.3751522533494px;width:103.53227771010961px;height:7.61266747868453px;background:#3a3a3a"></div>
<div class="pl" style="left:54.5px;top:940.3166869671129px;width:713.0px;height:4.8721071863581px;background:#6c6c6c"></div>
<div class="pl" style="left:79.17174177831912px;top:951.3447015834348px;width:103.53227771010961px;height:7.61266747868453px;background:#3a3a3a"></div>
<div class="pl" style="left:408.0389768574908px;top:951.3447015834348px;width:36.54080389768575px;height:7.61266747868453px;background:#3a3a3a"></div>
<div class="pl" style="left:633.3739342265529px;top:951.3447015834348px;width:30.45066991473812px;height:7.61266747868453px;background:#3a3a3a"></div>
<div class="pl" style="left:54.5px;top:967.1132764920831px;width:713.0px;height:4.8721071863581px;background:#6c6c6c"></div>
<div class="pl" style="left:79.17174177831912px;top:975.0962241169304px;width:103.53227771010961px;height:7.61266747868453px;background:#3a3a3a"></div>
<div class="pl" style="left:408.0389768574908px;top:975.0962241169304px;width:36.54080389768575px;height:7.61266747868453px;background:#3a3a3a"></div>
<div class="pl" style="left:633.3739342265529px;top:975.0962241169304px;width:30.45066991473812px;height:7.61266747868453px;background:#3a3a3a"></div>
<div class="pl" style="left:54.5px;top:992.6918392204626px;width:713.0px;height:4.8721071863581px;background:#6c6c6c"></div>
<div class="pl" style="left:54.81120584652862px;top:1024.426309378806px;width:115.71254567600486px;height:7.61266747868453px;background:#3a3a3a"></div>
<div class="pl" style="left:54.5px;top:1038.3678440925698px;width:713.0px;height:4.8721071863581px;background:#6c6c6c"></div>
<div class="pl" style="left:79.17174177831912px;top:1048.1778319123018px;width:103.53227771010961px;height:7.61266747868453px;background:#3a3a3a"></div>
<div class="pl" style="left:408.0389768574908px;top:1048.1778319123018px;width:42.63093788063337px;height:7.61266747868453px;background:#3a3a3a"></div>
<div class="pl" style="left:633.3739342265529px;top:1048.1778319123018px;width:30.45066991473812px;height:7.61266747868453px;background:#3a3a3a"></div>
<div class="pl" style="left:54.5px;top:1065.1644336175393px;width:713.0px;height:4.8721071863581px;background:#6c6c6c"></div>
<div class="pl" style="left:79.17174177831912px;top:1073.1473812423872px;width:103.53227771010961px;height:7.61266747868453px;background:#3a3a3a"></div>
<div class="pl" style="left:408.0389768574908px;top:1073.1473812423872px;width:42.63093788063337px;height:7.61266747868453px;background:#3a3a3a"></div>
<div class="pl" style="left:633.3739342265529px;top:1073.1473812423872px;width:30.45066991473812px;height:7.61266747868453px;background:#3a3a3a"></div>
<div class="pl" style="left:54.5px;top:1090.1339829476246px;width:713.0px;height:4.8721071863581px;background:#6c6c6c"></div></div></div>
 <div class="a" style="left:112px;top:235px;width:150px;height:20px;text-align:center;color:#fff;font-size:15px;line-height:20px">1</div>
 <div class="a" style="left:112px;top:273px;width:151px;height:205px;background:#8ab4f8"></div>
 <div class="a" style="left:120px;top:281px;width:135px;height:190px;overflow:hidden;background:#fff"><div class="pg thumbp" style="transform:scale(0.1642);transform-origin:0 0"><div class="pt" style="left:54.7px;top:57.56px;font-weight:bold;font-size:15.4px;color:#000">Item</div>
<div class="pt" style="left:411.5px;top:57.56px;font-weight:bold;font-size:15.4px;color:#000">Quantity</div>
<div class="pt" style="left:634.0px;top:57.56px;font-weight:bold;font-size:15.4px;color:#000">Total</div>
<div class="pl" style="left:54.5px;top:78.30px;width:713.0px;height:3.2px;background:#000"></div>
<div class="pt" style="left:54.7px;top:104.86px;font-weight:bold;font-size:15.4px;color:#000">New One-Time and Monthly Recurring</div>
<div class="pt" style="left:54.7px;top:124.06px;font-weight:bold;font-size:15.4px;color:#000">Activity:</div>
<div class="pt" style="left:54.7px;top:143.26px;font-weight:bold;font-size:15.4px;color:#000">Numbering and Campaign Activity:</div>
<div class="pt" style="left:54.7px;top:182.16px;font-weight:bold;font-size:15.4px;color:#000">Numbers:</div>
<div class="pl" style="left:54.5px;top:204.00px;width:713.0px;height:2px;background:#b2b2b2"></div>
<div class="pt" style="left:79.4px;top:208.32px;font-size:16.4px;color:#000">**US/CAN Local Number - Tier 1</div>
<div class="pt" style="left:411.5px;top:208.32px;font-size:16.4px;color:#000">4</div>
<div class="pt" style="left:634.0px;top:208.32px;font-size:16.4px;color:#000">6.968</div>
<div class="pl" style="left:54.5px;top:231.00px;width:713.0px;height:2px;background:#b2b2b2"></div>
<div class="pt" style="left:79.4px;top:234.76px;font-size:16.4px;color:#000">**US/CAN Tollfree Number - Tier 1</div>
<div class="pt" style="left:411.5px;top:234.76px;font-size:16.4px;color:#000">3</div>
<div class="pt" style="left:634.0px;top:234.76px;font-size:16.4px;color:#000">5.13</div>
<div class="pl" style="left:54.5px;top:257.00px;width:713.0px;height:2px;background:#b2b2b2"></div>
<div class="pt" style="left:79.4px;top:261.20px;font-size:16.4px;color:#000">US/CAN Tollfree Number - Vanity</div>
<div class="pt" style="left:411.5px;top:261.20px;font-size:16.4px;color:#000">0</div>
<div class="pt" style="left:634.0px;top:261.20px;font-size:16.4px;color:#000">0.00</div>
<div class="pl" style="left:54.5px;top:284.00px;width:713.0px;height:2px;background:#b2b2b2"></div>
<div class="pt" style="left:79.4px;top:287.64px;font-size:16.4px;color:#000">Short Code Lease &nbsp;- Random</div>
<div class="pt" style="left:411.5px;top:287.64px;font-size:16.4px;color:#000">4</div>
<div class="pt" style="left:634.0px;top:287.64px;font-size:16.4px;color:#000">6.84</div>
<div class="pl" style="left:54.5px;top:310.00px;width:713.0px;height:2px;background:#b2b2b2"></div>
<div class="pt" style="left:79.4px;top:314.08px;font-size:16.4px;color:#000">Short Code Lease &nbsp;- Vanity</div>
<div class="pt" style="left:411.5px;top:314.08px;font-size:16.4px;color:#000">0</div>
<div class="pt" style="left:634.0px;top:314.08px;font-size:16.4px;color:#000">0.00</div>
<div class="pl" style="left:54.5px;top:337.00px;width:713.0px;height:2px;background:#b2b2b2"></div>
<div class="pt" style="left:79.4px;top:340.52px;font-size:16.4px;color:#000">Short Code Lease &nbsp;- Migrated</div>
<div class="pt" style="left:411.5px;top:340.52px;font-size:16.4px;color:#000">0</div>
<div class="pt" style="left:634.0px;top:340.52px;font-size:16.4px;color:#000">0.00</div>
<div class="pl" style="left:54.5px;top:363.00px;width:713.0px;height:2px;background:#b2b2b2"></div>
<div class="pt" style="left:79.4px;top:366.96px;font-size:16.4px;color:#000">Imported OTT Mash</div>
<div class="pt" style="left:411.5px;top:366.96px;font-size:16.4px;color:#000">0</div>
<div class="pt" style="left:634.0px;top:366.96px;font-size:16.4px;color:#000">0.00</div>
<div class="pl" style="left:54.5px;top:389.00px;width:713.0px;height:2px;background:#b2b2b2"></div>
<div class="pt" style="left:54.7px;top:412.36px;font-weight:bold;font-size:15.4px;color:#000">A2P Campaign:</div>
<div class="pl" style="left:54.5px;top:435.00px;width:713.0px;height:2px;background:#b2b2b2"></div>
<div class="pt" style="left:79.4px;top:439.02px;font-size:16.4px;color:#000">Brand Registration</div>
<div class="pt" style="left:411.5px;top:439.02px;font-size:16.4px;color:#000">5</div>
<div class="pt" style="left:634.0px;top:439.02px;font-size:16.4px;color:#000">20</div>
<div class="pl" style="left:54.5px;top:462.00px;width:713.0px;height:2px;background:#b2b2b2"></div>
<div class="pt" style="left:79.4px;top:465.46px;font-size:16.4px;color:#000">Brand Vetting</div>
<div class="pt" style="left:411.5px;top:465.46px;font-size:16.4px;color:#000">0</div>
<div class="pt" style="left:634.0px;top:465.46px;font-size:16.4px;color:#000">0.00</div>
<div class="pl" style="left:54.5px;top:488.00px;width:713.0px;height:2px;background:#b2b2b2"></div>
<div class="pt" style="left:79.4px;top:491.90px;font-size:16.4px;color:#000">Brand Appeal</div>
<div class="pt" style="left:411.5px;top:491.90px;font-size:16.4px;color:#000">0</div>
<div class="pt" style="left:634.0px;top:491.90px;font-size:16.4px;color:#000">0.00</div>
<div class="pl" style="left:54.5px;top:514.00px;width:713.0px;height:2px;background:#b2b2b2"></div>
<div class="pt" style="left:79.4px;top:518.34px;font-size:16.4px;color:#000">Campaign Registration</div>
<div class="pt" style="left:411.5px;top:518.34px;font-size:16.4px;color:#000">12</div>
<div class="pt" style="left:634.0px;top:518.34px;font-size:16.4px;color:#000">211</div>
<div class="pl" style="left:54.5px;top:541.00px;width:713.0px;height:2px;background:#b2b2b2"></div>
<div class="pt" style="left:79.4px;top:544.78px;font-size:16.4px;color:#000">Campaign Review</div>
<div class="pt" style="left:411.5px;top:544.78px;font-size:16.4px;color:#000">7</div>
<div class="pt" style="left:634.0px;top:544.78px;font-size:16.4px;color:#000">28</div>
<div class="pl" style="left:54.5px;top:567.00px;width:713.0px;height:2px;background:#b2b2b2"></div>
<div class="pt" style="left:79.4px;top:571.22px;font-size:16.4px;color:#000">Redundant Campaign</div>
<div class="pt" style="left:411.5px;top:571.22px;font-size:16.4px;color:#000">0</div>
<div class="pt" style="left:634.0px;top:571.22px;font-size:16.4px;color:#000">0.00</div>
<div class="pl" style="left:54.5px;top:593.00px;width:718.5px;height:2px;background:#b2b2b2"></div>
<div class="pt" style="left:54.7px;top:595.08px;font-size:19.4px;color:#1f3ff2">Total Amount(USD):</div>
<div class="pt" style="left:626.0px;top:595.08px;font-size:19.4px;color:#1f3ff2">$ 896.08</div>
<div class="pt" style="left:54.7px;top:630.66px;font-weight:bold;font-size:15.4px;color:#000"></div></div></div>
 <div class="a" style="left:112px;top:485px;width:150px;height:20px;text-align:center;color:#fff;font-size:15px;line-height:20px">2</div>
</div>
<div class="a" style="left:0;top:0;width:1230px;height:70px;background:#323639;box-shadow:0 1px 4px rgba(0,0,0,.5)">
 <div class="a" style="left:30px;top:28.1px;width:21px;height:2.3px;background:#fff"></div>
 <div class="a" style="left:30px;top:34.7px;width:21px;height:2.3px;background:#fff"></div>
 <div class="a" style="left:30px;top:40.8px;width:21px;height:2.3px;background:#fff"></div>
 <div class="a" style="left:80px;top:26px;font-size:17px;font-weight:bold;color:#fff;line-height:22px">1728629834106-66wlzrlnpn.pdf</div>
 <div class="a" style="left:444px;top:22px;width:29px;height:25px;background:#1b1d1e;color:#fff;font-size:16px;line-height:27px;text-align:center">2</div>
 <div class="a" style="left:477px;top:25px;font-size:16px;color:#fff;line-height:22px">/</div>
 <div class="a" style="left:494px;top:25px;font-size:16px;color:#fff;line-height:22px">2</div>
 <div class="a" style="left:533px;top:26.5px;width:2px;height:17px;background:#80868b"></div>
 <div class="a" style="left:552px;top:34px;width:15.5px;height:2px;background:#fff"></div>
 <div class="a" style="left:585px;top:22px;width:55px;height:25px;background:#1b1d1e;color:#fff;font-size:16px;line-height:27px;text-align:center">83%</div>
 <div class="a" style="left:656.5px;top:34px;width:15.5px;height:2px;background:#fff"></div>
 <div class="a" style="left:663.3px;top:27.2px;width:2px;height:15.5px;background:#fff"></div>
 <div class="a" style="left:690px;top:27px;width:1.5px;height:16px;background:#80868b"></div>
 <svg class="a" style="left:713px;top:26px" width="24" height="20" viewBox="0 0 24 20"><rect x="1" y="1" width="21.5" height="17" rx="2" stroke="#fff" stroke-width="2" fill="none"/><path d="M11.75 4L8.8 7.5H14.7Z M11.75 15.2L8.8 11.7H14.7Z" fill="#fff"/></svg>
 <svg class="a" style="left:753px;top:24px" width="26" height="24" viewBox="0 0 26 24"><path d="M7.5 6.5 L2 12 L7.5 17.5 L13 12 Z" stroke="#fff" stroke-width="1.9" fill="none" stroke-linejoin="round"/><path d="M13 3 A9 9 0 1 1 11 20.8" stroke="#fff" stroke-width="1.9" fill="none"/><path d="M16 0.2 L12.8 3 L16 5.8" stroke="#fff" stroke-width="1.9" fill="none"/></svg>
 <svg class="a" style="left:1092px;top:26px" width="17" height="18" viewBox="0 0 17 18"><path d="M8.5 0.5V12M3.5 7L8.5 12L13.5 7" stroke="#fff" stroke-width="1.8" fill="none"/><path d="M1.2 12V16.2H15.8V12" stroke="#fff" stroke-width="2" fill="none"/></svg>
 <svg class="a" style="left:1135px;top:25px" width="22" height="21" viewBox="0 0 22 21"><rect x="4.5" y="0.5" width="13" height="4" fill="#fff"/><path d="M3 5.5H19Q21 5.5 21 7.5V15H17.5V12H4.5V15H1V7.5Q1 5.5 3 5.5Z" fill="#fff"/><rect x="5.5" y="13" width="11" height="7" fill="#fff"/><rect x="7" y="14" width="8" height="4" fill="#323639"/><circle cx="18" cy="8.5" r="0.9" fill="#323639"/></svg>
 <div class="a" style="left:1188.3px;top:26.9px;width:4.2px;height:4.2px;border-radius:50%;background:#fff"></div>
 <div class="a" style="left:1188.3px;top:33.4px;width:4.2px;height:4.2px;border-radius:50%;background:#fff"></div>
 <div class="a" style="left:1188.3px;top:39.9px;width:4.2px;height:4.2px;border-radius:50%;background:#fff"></div>
</div>
</div>
<div id="taskbar" class="a" style="background:linear-gradient(90deg,#372e2a 0px,#38312c 300px,#38342d 500px,#35322c 700px,#222121 790px,#1e1e1f 850px,#1e1e1f 1040px,#211f1f 1110px,#2f2e28 1220px,#33322a 1380px,#302e28 1920px)">
  <svg class="a" style="left:20px;top:14px" width="21" height="22" viewBox="0 0 21 22"><path d="M0 3.2L8.5 2V10.3H0Z M9.5 1.9L20.3 0.3V10.3H9.5Z M0 11.3H8.5V19.6L0 18.5Z M9.5 11.3H20.3V21.3L9.5 19.8Z" fill="#fff"/></svg>
  <div class="a" style="left:60px;top:0;width:360px;height:50px;background:#333;border:1px solid #5e5e5e;border-bottom:none"></div>
  <svg class="a" style="left:74px;top:14px" width="22" height="22" viewBox="0 0 22 22"><circle cx="13" cy="8.5" r="6.2" stroke="#e8e8e8" stroke-width="1.6" fill="none"/><path d="M8.5 13L1.5 20" stroke="#e8e8e8" stroke-width="1.7"/></svg>
  <div class="a" style="left:110px;top:13px;font-size:18.4px;color:#e4e4e4;line-height:24px;white-space:nowrap">Type here to search</div>
  <svg class="a" style="left:326px;top:0px" width="84" height="50" viewBox="0 0 84 50"><defs><linearGradient id="stg" x1="0" y1="0" x2="0" y2="1"><stop offset="0" stop-color="#ffd84e"/><stop offset="1" stop-color="#f2a51c"/></linearGradient></defs><path d="M34 8.5 Q38.06 18.94 48.5 23 Q38.06 27.06 34 37.5 Q29.94 27.06 19.5 23 Q29.94 18.94 34 8.5Z" fill="url(#stg)"/><path d="M62.75 21.55 Q64.77 26.73 69.95 28.75 Q64.77 30.77 62.75 35.95 Q60.73 30.77 55.55 28.75 Q60.73 26.73 62.75 21.55Z" fill="url(#stg)"/><path d="M10 29.8 Q11.30 33.70 15.2 35 Q11.30 36.30 10 40.2 Q8.70 36.30 4.8 35 Q8.70 33.70 10 29.8Z" fill="#2aa0f2"/><circle cx="54.5" cy="12.5" r="2.4" fill="#f26b3a"/><circle cx="77.75" cy="37" r="2.4" fill="#7cc24a"/></svg>
  <svg class="a" style="left:439px;top:14px" width="24" height="22" viewBox="0 0 24 22"><path d="M1.6 1V4.6H14.1V1 M1.6 21V17.2H14.1V21 M19.6 1V5.6 M19.6 10.6V21" stroke="#fff" stroke-width="1.3" fill="none"/><rect x="1.6" y="6.4" width="12.5" height="8.8" stroke="#fff" stroke-width="1.3" fill="none"/><rect x="18" y="6.6" width="3.2" height="3.2" fill="#fff"/></svg>
  <svg class="a" style="left:500px;top:12px" width="28" height="26" viewBox="0 0 28 26"><path d="M0 3Q0 1 2 1H10L12 3H26Q28 3 28 5V8H0Z" fill="#e8a623"/><path d="M0 6H28V22Q28 24 26 24H2Q0 24 0 22Z" fill="#fcd05a"/><path d="M6 26V13H22V26H18V17H10V26Z" fill="#3b8ee8"/></svg>
  <svg class="a" style="left:562px;top:10px" width="28" height="30" viewBox="0 0 28 30"><defs><linearGradient id="cpa" x1="0" y1="0" x2="1" y2="1"><stop offset="0" stop-color="#56c8f2"/><stop offset="1" stop-color="#2f6fe0"/></linearGradient><linearGradient id="cpb" x1="0" y1="0" x2="0" y2="1"><stop offset="0" stop-color="#a47be8"/><stop offset="1" stop-color="#3d74e0"/></linearGradient><linearGradient id="cpc" x1="0" y1="0" x2="1" y2="0"><stop offset="0" stop-color="#d49af5"/><stop offset="1" stop-color="#7a52cf"/></linearGradient></defs>
<path d="M12 1.2 Q14 0 16 1.2 L25.5 6.8 Q27.3 7.9 27.3 10 V20 Q27.3 22.1 25.5 23.2 L16 28.8 Q14 30 12 28.8 L2.5 23.2 Q0.7 22.1 0.7 20 V10 Q0.7 7.9 2.5 6.8Z" fill="url(#cpb)"/>
<path d="M12 1.2 Q14 0 16 1.2 L25.5 6.8 Q27.3 7.9 27.3 10 V19 L19 14 V12 L14 9 Q11 7.5 10.5 4 Z" fill="url(#cpa)"/>
<path d="M27.3 19 V20 Q27.3 22.1 25.5 23.2 L16 28.8 Q14 30 12 28.8 L6 25.3 Q10 24 13 22 L19 18 V14Z" fill="url(#cpc)"/>
<path d="M14 9 L19 12 V18 L14 21 L9 18 V12Z" fill="#37332d"/></svg>
  <svg class="a" style="left:623px;top:10px" width="31" height="31" viewBox="0 0 31 31"><defs><linearGradient id="eda" x1="0" y1="0" x2="1" y2=".6"><stop offset="0" stop-color="#2fb6ef"/><stop offset=".55" stop-color="#36c3e6"/><stop offset="1" stop-color="#5fd665"/></linearGradient><linearGradient id="edb" x1="0" y1="0" x2="1" y2="1"><stop offset="0" stop-color="#2a8ee0"/><stop offset="1" stop-color="#0d4f9e"/></linearGradient></defs>
<circle cx="15.5" cy="15.5" r="15" fill="url(#eda)"/>
<path d="M0.6 16 Q0.5 9 6 5.5 Q3 12 9 16.5 Q12 20 15.5 20.5 Q21 21 25 19 Q29 18 29.5 21 Q26.5 28 18 30 Q14 30.8 10 29.5 Q1.5 26 0.6 16Z" fill="url(#edb)"/>
<path d="M9 15.5 Q9.5 10 16 9.8 Q22 10 22 15.2 Q21.8 17.5 19 18 Q14.5 18.2 13.5 15.5Z" fill="#37332d"/>
<path d="M22 15.2 Q21.8 17.5 19 18 H24 Q28 18 30 17 Q30.5 13 29 10 Q27 15 22 15.2Z" fill="#5fd665"/></svg>
  <svg class="a" style="left:685px;top:9px" width="30" height="31" viewBox="0 0 30 31"><defs><linearGradient id="pha" x1="0" y1="0" x2="0" y2="1"><stop offset="0" stop-color="#a9d4ef"/><stop offset=".5" stop-color="#5d9fd6"/><stop offset="1" stop-color="#9fc8e0"/></linearGradient><linearGradient id="phb" x1="0" y1="0" x2="1" y2="0"><stop offset="0" stop-color="#c8dcea"/><stop offset=".45" stop-color="#8fb6d0"/><stop offset=".55" stop-color="#d9a466"/><stop offset="1" stop-color="#b8743a"/></linearGradient></defs>
<rect x="0.8" y="5.5" width="24.5" height="24" fill="#3b5fe0"/><rect x="2.3" y="7" width="21.5" height="21" fill="url(#pha)"/>
<ellipse cx="19" cy="15.5" rx="9.6" ry="13.6" fill="url(#phb)" stroke="#1e3a7a" stroke-width="1.7"/>
<path d="M18 9 Q24 11 24 17 Q24 21 21 22 Q17 18 18 9Z" fill="#2a1508"/></svg>
  <div class="a" style="left:732px;top:0;width:56px;height:50px;background:#4b4b4b"></div>
  <div class="a" style="left:789px;top:0;width:4px;height:50px;background:#3e3e3e"></div>
  <div class="a" style="left:732px;top:47px;width:61px;height:3px;background:#76b9ed"></div>
  <svg class="a" style="left:747px;top:9px" width="32" height="32" viewBox="0 0 32 32"><circle cx="15" cy="15" r="14" fill="#db4437"/><path d="M15 15 L2.9 22 A14 14 0 0 0 15 29 L22 17Z" fill="#0f9d58"/><path d="M15 15 L15 1 A14 14 0 0 1 29 15 L22 15Z" fill="#f4b400"/><path d="M15 15 L27.1 22 A14 14 0 0 1 15 29 Z" fill="#0f9d58" opacity="0"/><path d="M22 15 H29 A14 14 0 0 1 15 29 Z" fill="#f4b400"/><circle cx="15" cy="15" r="6" fill="#fff"/><circle cx="15" cy="15" r="4.8" fill="#4285f4"/><circle cx="22" cy="23.5" r="8.3" fill="#232323"/><circle cx="22" cy="20.5" r="2.6" fill="#fff"/><path d="M17 28 Q17 24 22 24 Q27 24 27 28Z" fill="#fff"/></svg>
  <svg class="a" style="left:808px;top:9px" width="32" height="31" viewBox="0 0 32 31"><path d="M2.76 22.04 A15 15 0 0 1 14.95 0.04 L15.56 8.72 A6.3 6.3 0 0 0 10.44 17.96Z" fill="#2a9ff7"/><path d="M17.05 0.04 A15 15 0 0 1 29.24 22.04 L21.56 17.96 A6.3 6.3 0 0 0 16.44 8.72Z" fill="#63b9fb"/><path d="M25.70 25.78 A14.5 14.5 0 0 1 6.30 25.78 L11.78 19.68 A6.3 6.3 0 0 0 20.22 19.68Z" fill="#2c5df5"/></svg>
  <svg class="a" style="left:871px;top:9px" width="30" height="31" viewBox="0 0 30 31"><defs><radialGradient id="ff" cx=".5" cy=".35" r=".7"><stop offset="0" stop-color="#ffd53a"/><stop offset=".5" stop-color="#ff7a1f"/><stop offset="1" stop-color="#e8305a"/></radialGradient></defs><path d="M15 30 A14 14 0 0 1 2 12 Q4 6 7 5 Q6 9 8 11 Q10 6 14 5 Q18 1 18 0 Q24 4 26 8 Q30 14 28 20 A14 14 0 0 1 15 30Z" fill="url(#ff)"/><circle cx="15" cy="17" r="6" fill="#7542e5"/><path d="M6 14 Q10 11 15 12 Q11 13 10 17Z" fill="#ffb33a"/></svg>
  <svg class="a" style="left:933px;top:15px" width="31" height="21" viewBox="0 0 31 21"><rect width="31" height="21" rx="5" fill="#f00"/><path d="M12 5.5V15.5L20.5 10.5Z" fill="#fff"/></svg>
  <div class="a" style="left:980px;top:0;width:61px;height:50px;background:#a0561f"></div>
  <div class="a" style="left:980px;top:47px;width:61px;height:3px;background:#f07d17"></div>
  <svg class="a" style="left:994px;top:10px" width="36" height="36" viewBox="0 0 36 36"><defs><linearGradient id="sky" x1="0" y1="0" x2="1" y2="1"><stop offset="0" stop-color="#22b8f2"/><stop offset="1" stop-color="#0a74d0"/></linearGradient></defs><circle cx="9" cy="8" r="6.5" fill="url(#sky)"/><circle cx="21" cy="21" r="7" fill="url(#sky)"/><circle cx="15" cy="14.5" r="12.3" fill="url(#sky)"/><text x="14.8" y="21.5" font-size="19" fill="#fff" text-anchor="middle" style="font-family:'Liberation Sans';font-weight:bold">S</text><circle cx="23.8" cy="22.4" r="9.3" fill="#e8402f" stroke="#8a3a1a" stroke-width="0.5"/><text x="23.8" y="27.6" font-size="14" fill="#fff" text-anchor="middle" style="font-family:'Liberation Sans'">1</text></svg>
  <div class="a" style="left:1047px;top:47px;width:51px;height:3px;background:#76b9ed"></div>
  <svg class="a" style="left:1058px;top:10px" width="28" height="32" viewBox="0 0 28 32"><path d="M3 3 Q1 3 1 6 V28 Q1 30 3 30 H25 Q27 30 27 28 V6 Q27 3 25 3Z" fill="#d9e6f2"/><rect x="1" y="1" width="26" height="5" rx="2" fill="#a9c2dc"/><rect x="1" y="27" width="26" height="4" rx="2" fill="#a9c2dc"/><text x="9" y="20" font-size="15" fill="#e87a2b" text-anchor="middle" font-family="Liberation Serif">A</text><path d="M14 10H24M14 13H24M14 16H24M5 22H23M5 25H20" stroke="#5a88c8" stroke-width="1.3"/></svg>
  <svg class="a" style="left:1395px;top:12px" width="31" height="26" viewBox="0 0 31 26"><defs><linearGradient id="sun" x1="0" y1="0" x2="0" y2="1"><stop offset="0" stop-color="#ffc23a"/><stop offset="1" stop-color="#f5851f"/></linearGradient></defs><circle cx="15" cy="13" r="13" fill="url(#sun)"/><path d="M2 8H29M0 13H26M3 18H30M7 23H22" stroke="#f4e6c8" stroke-width="2" stroke-linecap="round" opacity=".9"/></svg>
  <div class="a" style="left:1436px;top:13px;font-size:18px;color:#f0f0f0;line-height:24px;white-space:nowrap;letter-spacing:-0.3px">34°C &nbsp;Haze</div>
  <svg class="a" style="left:1552px;top:18px" width="18" height="12" viewBox="0 0 18 12"><path d="M1.5 10.5L9 3L16.5 10.5" stroke="#f0f0f0" stroke-width="1.5" fill="none"/></svg>
  <svg class="a" style="left:1581px;top:16px" width="22" height="16" viewBox="0 0 22 16"><path d="M1 1V5M4 1V5M0.5 5H4.5V8H2.5V9.5" stroke="#f0f0f0" stroke-width="1.3" fill="none"/><rect x="5" y="5" width="14" height="9" stroke="#f0f0f0" stroke-width="1.4" fill="none"/><rect x="7" y="7" width="10" height="5" fill="#f0f0f0"/><rect x="19.5" y="8" width="2" height="3" fill="#f0f0f0"/></svg>
  <svg class="a" style="left:1614px;top:16px" width="20" height="18" viewBox="0 0 20 18"><path d="M1 10 A13 13 0 0 1 14 1 M4 12 A9 9 0 0 1 13 5 M7 14 A5 5 0 0 1 12 9" stroke="#f0f0f0" stroke-width="1.3" fill="none"/><circle cx="14" cy="15" r="1.6" fill="#f0f0f0"/></svg>
  <svg class="a" style="left:1641px;top:14px" width="22" height="20" viewBox="0 0 22 20"><path d="M1 7H5L10 2V18L5 13H1Z" stroke="#f0f0f0" stroke-width="1.3" fill="none"/><path d="M13 7 Q15 10 13 13 M15.5 4.5 Q19 10 15.5 15.5 M18 2 Q23 10 18 18" stroke="#f0f0f0" stroke-width="1.3" fill="none"/></svg>
  <div class="a" style="left:1675px;top:14px;font-size:14.7px;color:#f0f0f0;line-height:24px;letter-spacing:0.2px">ENG</div>
  <div class="a" style="left:1715px;top:2px;width:85px;text-align:center;font-size:16.5px;color:#f0f0f0;line-height:24px">12:46</div>
  <div class="a" style="left:1710px;top:25px;width:95px;text-align:center;font-size:16.5px;color:#f0f0f0;line-height:24px;letter-spacing:-0.6px">11-10-2024</div>
  <svg class="a" style="left:1818px;top:13px" width="30" height="32" viewBox="0 0 30 32"><path d="M1 1H21V16H8L4 20V16H1Z" fill="#f4f4f4"/><path d="M4 5H18M4 8.5H18M4 12H14" stroke="#302e28" stroke-width="1.3"/><circle cx="20" cy="21.5" r="9" fill="#302e28" stroke="#a0a0a0" stroke-width="1.2"/><text x="20" y="27" font-size="15" font-weight="bold" fill="#f4f4f4" text-anchor="middle" font-family="Liberation Sans">4</text></svg>
  <svg class="a" style="left:1864px;top:12px" width="30" height="28" viewBox="0 0 30 28"><defs><linearGradient id="cop" x1="0" y1="0" x2="1" y2="1"><stop offset="0" stop-color="#39b8f0"/><stop offset=".5" stop-color="#8d6ef0"/><stop offset="1" stop-color="#e85ab8"/></linearGradient></defs><path d="M8 1H18Q21 1 22 4L26 17Q27 21 23 21H13Q10 21 9 18L5 5Q4 1 8 1Z" fill="url(#cop)"/><path d="M3 6 Q1 6 1 10 V16 Q1 20 5 20 H10 L6 6Z" fill="#3b9af0"/><rect x="12" y="17" width="18" height="10" rx="2" fill="#f4c020"/><text x="21" y="25.5" font-size="8" font-weight="bold" fill="#222" text-anchor="middle" font-family="Liberation Sans">PRE</text></svg>
  <div class="a" style="left:1914px;top:0;width:1px;height:50px;background:#6a6a6a"></div>
</div>
</body></html>
